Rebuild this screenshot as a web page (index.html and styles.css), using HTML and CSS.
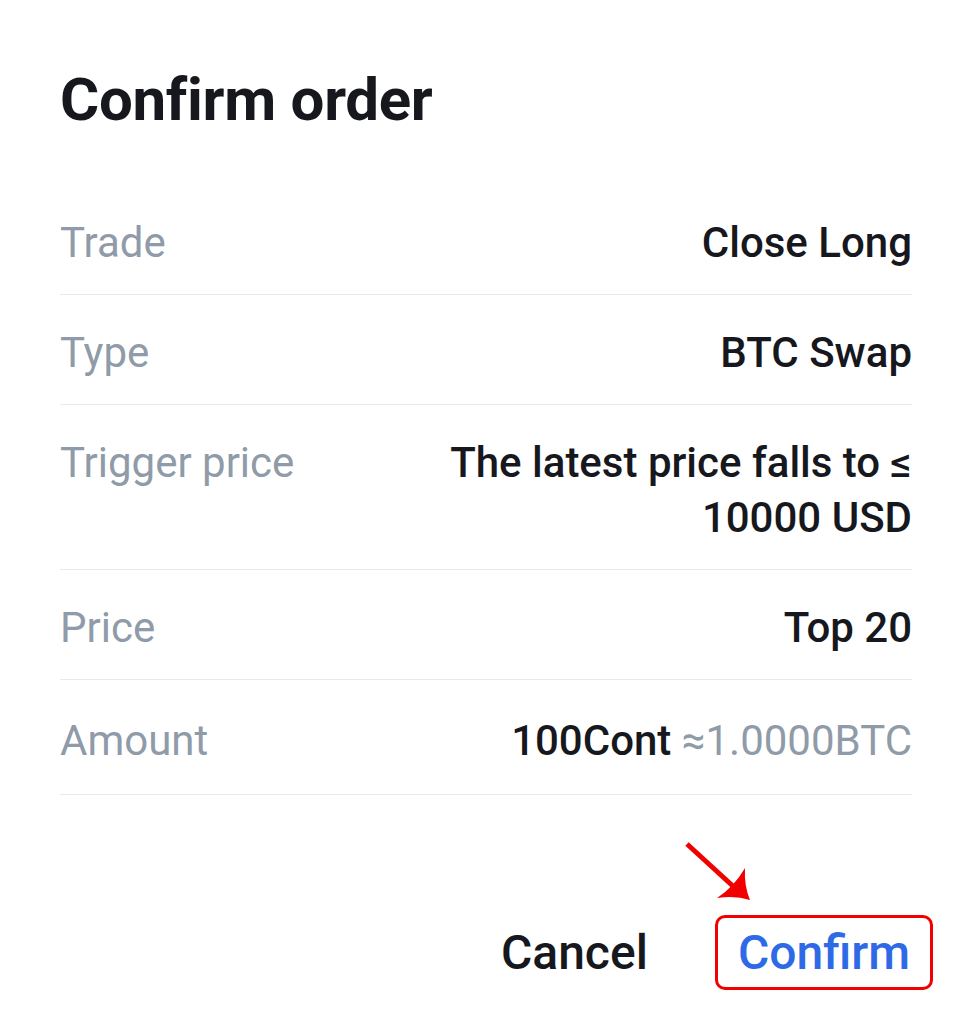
FILE: index.html
```html
<!DOCTYPE html>
<html lang="en">
<head>
<meta charset="utf-8">
<title>Confirm order</title>
<link rel="stylesheet" href="styles.css">
</head>
<body>
<div class="dialog">
  <h1 class="title">Confirm order</h1>
  <div class="rows">
    <div class="row">
      <div class="label">Trade</div>
      <div class="value">Close Long</div>
    </div>
    <div class="row">
      <div class="label">Type</div>
      <div class="value">BTC Swap</div>
    </div>
    <div class="row">
      <div class="label">Trigger price</div>
      <div class="value">The latest price falls to ≤<br>10000 USD</div>
    </div>
    <div class="row">
      <div class="label">Price</div>
      <div class="value">Top 20</div>
    </div>
    <div class="row row-amount">
      <div class="label">Amount</div>
      <div class="value">100Cont <span class="sub">≈1.0000BTC</span></div>
    </div>
  </div>
  <div class="actions">
    <button class="btn btn-cancel">Cancel</button>
    <button class="btn btn-confirm">Confirm</button>
    <svg class="arrow" width="80" height="80" viewBox="0 0 80 80">
      <line x1="7" y1="5" x2="55" y2="49" stroke="#f20000" stroke-width="5"/>
      <path d="M70 61 Q55 56 37 59 Q54 48 65 29 Q64 47 70 61 Z" fill="#f20000"/>
    </svg>
  </div>
</div>
</body>
</html>
```

FILE: styles.css
```css
html, body {
  margin: 0;
  padding: 0;
  background: #ffffff;
}

body {
  font-family: Roboto, "Liberation Sans", Arial, sans-serif;
  color: #16181d;
}

.dialog {
  width: 972px;
  height: 1031px;
  box-sizing: border-box;
  padding: 64px 60px 0 60px;
  background: #ffffff;
}

.title {
  margin: 0;
  font-size: 60px;
  line-height: 72px;
  font-weight: 700;
  color: #16181d;
  letter-spacing: -0.3px;
}

.rows {
  margin-top: 49px;
}

.row {
  display: flex;
  justify-content: space-between;
  align-items: flex-start;
  padding: 30px 0 24px 0;
  border-bottom: 1px solid #e6e9ee;
  font-size: 42px;
  line-height: 55px;
}

.row-amount {
  padding-top: 33px;
  padding-bottom: 26px;
}

.label {
  color: #8f9ba8;
  font-weight: 400;
  white-space: nowrap;
}

.value {
  text-align: right;
  font-weight: 500;
  color: #16181d;
}

.sub {
  color: #8f9ba8;
  font-weight: 400;
}

.actions {
  position: relative;
  display: flex;
  justify-content: flex-end;
  align-items: center;
  gap: 67px;
  margin-top: 120px;
  margin-right: -21px;
}

.btn {
  font-family: Roboto, "Liberation Sans", Arial, sans-serif;
  font-size: 48px;
  font-weight: 500;
  background: none;
  border: 3px solid transparent;
  border-radius: 10px;
  padding: 0 20px;
  height: 75px;
  line-height: 69px;
  cursor: pointer;
}

.btn-cancel {
  color: #16181d;
  padding: 0;
  border: none;
}

.btn-confirm {
  color: #2e6ae6;
  border-color: #f20000;
}

.arrow {
  position: absolute;
  left: 620px;
  top: -76px;
}
```
